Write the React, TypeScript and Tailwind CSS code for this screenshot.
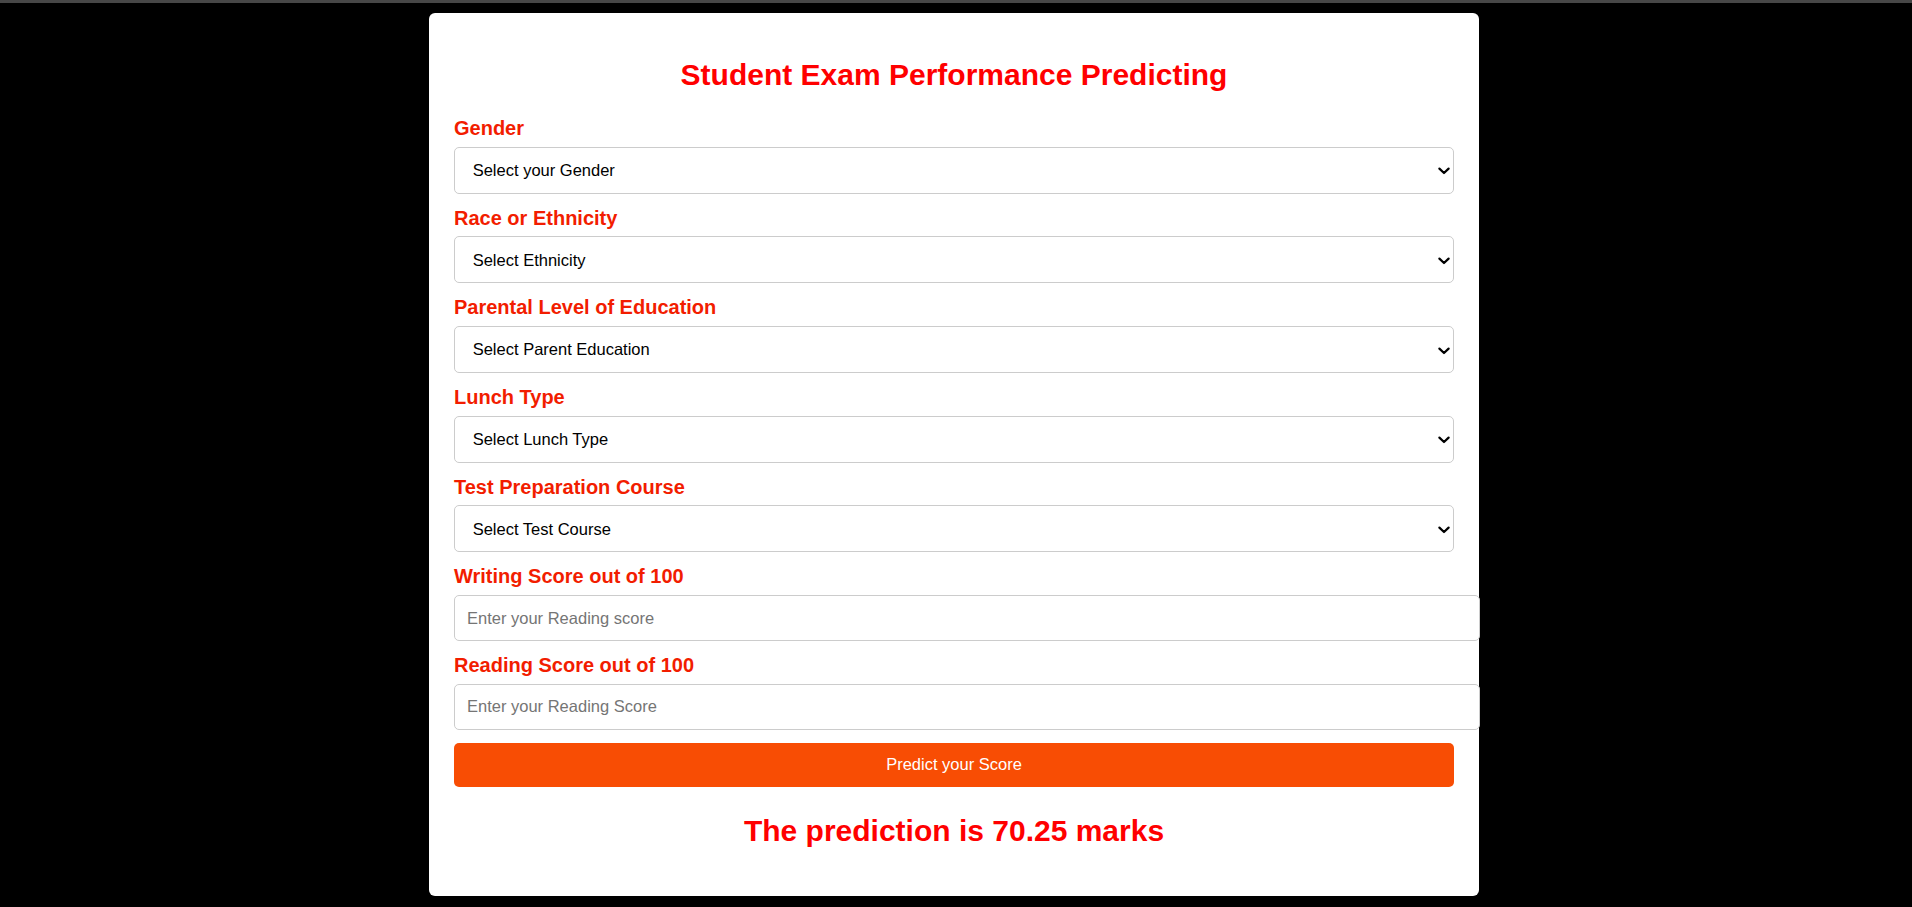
import React from "react";

const fields = [
  { label: "Gender", placeholder: "Select your Gender", options: ["male", "female"] },
  { label: "Race or Ethnicity", placeholder: "Select Ethnicity", options: ["group A", "group B", "group C", "group D", "group E"] },
  { label: "Parental Level of Education", placeholder: "Select Parent Education", options: ["associate's degree", "bachelor's degree", "high school", "master's degree", "some college", "some high school"] },
  { label: "Lunch Type", placeholder: "Select Lunch Type", options: ["free/reduced", "standard"] },
  { label: "Test Preparation Course", placeholder: "Select Test Course", options: ["none", "completed"] },
];

const inputs = [
  { label: "Writing Score out of 100", placeholder: "Enter your Reading score" },
  { label: "Reading Score out of 100", placeholder: "Enter your Reading Score" },
];

function Label({ children }: { children: React.ReactNode }) {
  return (
    <label className="block mt-[13px] mb-[6.7px] text-[20px] leading-[23px] font-bold text-[#f21d00]">
      {children}
    </label>
  );
}

export default function App() {
  return (
    <div
      className="min-h-screen bg-black"
      style={{ fontFamily: '"Liberation Sans", Arial, sans-serif' }}
    >
      <div className="h-[3px] bg-[#474747]" />
      <div className="mt-[10px] ml-[calc(50%-527px)] w-[1050px] h-[883px] bg-white rounded-[6px] px-[25px] pt-[44px]">
        <h1 className="text-center text-[30px] leading-[35px] font-bold text-[#ff0000] mb-[25px]">
          Student Exam Performance Predicting
        </h1>
        <form onSubmit={(e) => e.preventDefault()}>
          {fields.map((f) => (
            <div key={f.label}>
              <Label>{f.label}</Label>
              <div className="relative w-full">
                <select
                  defaultValue=""
                  className="appearance-none w-full h-[47px] border border-[#cccccc] rounded-[5px] bg-white pl-[17.7px] pr-[24px] text-[16.5px] text-black outline-none"
                >
                  <option value="" disabled>
                    {f.placeholder}
                  </option>
                  {f.options.map((o) => (
                    <option key={o} value={o}>
                      {o}
                    </option>
                  ))}
                </select>
                <svg
                  className="pointer-events-none absolute right-[4px] top-1/2 -translate-y-1/2 mt-[1px]"
                  width="12"
                  height="8"
                  viewBox="0 0 12 8"
                  fill="none"
                >
                  <path d="M1.4 1.6 L6 6 L10.6 1.6" stroke="#000" strokeWidth="2.2" strokeLinecap="round" strokeLinejoin="round" />
                </svg>
              </div>
            </div>
          ))}
          {inputs.map((f) => (
            <div key={f.label}>
              <Label>{f.label}</Label>
              <input
                type="text"
                placeholder={f.placeholder}
                className="block w-[calc(100%+26px)] h-[46px] border border-[#cccccc] rounded-[5px] bg-white px-[12px] text-[16.5px] text-black placeholder:text-[#757575] outline-none"
              />
            </div>
          ))}
          <button
            type="submit"
            className="block w-full mt-[13px] h-[44px] rounded-[5px] bg-[#f84d04] text-white text-[16.5px]"
          >
            Predict your Score
          </button>
        </form>
        <h2 className="mt-[26px] text-center text-[30px] leading-[35px] font-bold text-[#ff0000]">
          The prediction is 70.25 marks
        </h2>
      </div>
    </div>
  );
}
